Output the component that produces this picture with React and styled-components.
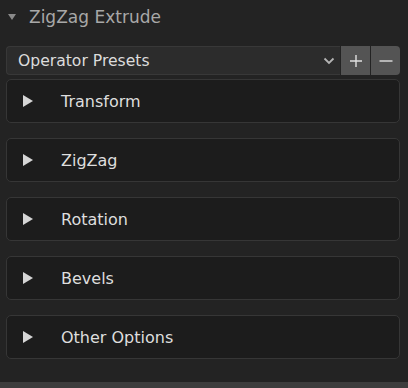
import styled, { createGlobalStyle } from "styled-components";

const GlobalStyle = createGlobalStyle`
    html, body {
        margin: 0;
        padding: 0;
        background: #232323;
        font-family: "DejaVu Sans", "Liberation Sans", sans-serif;
        -webkit-font-smoothing: antialiased;
    }
`;

const Page = styled.div`
    width: 408px;
    height: 388px;
    display: flex;
    flex-direction: column;
    background: #232323;
    overflow: hidden;
`;

const Content = styled.div`
    flex: 1;
    display: flex;
    flex-direction: column;
    padding: 0 8px 0 6px;
`;

const Header = styled.div`
    height: 34px;
    display: flex;
    align-items: center;
    gap: 13px;
    padding-left: 2px;
    color: #a8a8a8;
    font-size: 17px;
    margin-bottom: 12px;
`;

const PresetRow = styled.div`
    display: flex;
    height: 29px;
    gap: 1px;
    margin-bottom: 4px;
`;

const Select = styled.div`
    flex: 1;
    display: flex;
    align-items: center;
    justify-content: space-between;
    padding: 0 5px 0 11px;
    background: #2c2c2c;
    border: 1px solid #383838;
    border-right: none;
    border-radius: 4px 0 0 4px;
    color: #dcdcdc;
    font-size: 15.6px;
`;

const IconButton = styled.div`
    width: 29px;
    display: flex;
    align-items: center;
    justify-content: center;
    background: #545454;
    border-radius: ${(p) => (p.$last ? "0 4px 4px 0" : "0")};
`;

const PanelList = styled.div`
    display: flex;
    flex-direction: column;
    gap: 15px;
`;

const Panel = styled.div`
    height: 42px;
    display: flex;
    align-items: center;
    background: #1c1c1c;
    border: 1px solid #363636;
    border-radius: 5px;
    color: #dedede;
    font-size: 16px;
`;

const Arrow = styled.span`
    width: 54px;
    display: flex;
    padding-left: 16px;
    box-sizing: border-box;
`;

const Viewport = styled.div`
    height: 6px;
    background: #3d3d3d;
`;

const Triangle = ({ down, size = 10, color }) =>
    down ? (
        <svg width="8" height="6" viewBox="0 0 8 6">
            <polygon points="0,0 8,0 4,6" fill={color} />
        </svg>
    ) : (
        <svg width={size} height="12" viewBox="0 0 10 12">
            <polygon points="0,0 10,6 0,12" fill={color} />
        </svg>
    );

const panels = ["Transform", "ZigZag", "Rotation", "Bevels", "Other Options"];

export default function App() {
    return (
        <>
            <GlobalStyle />
            <Page>
                <Content>
                    <Header>
                        <Triangle down color="#8a8a8a" />
                        <span>ZigZag Extrude</span>
                    </Header>
                    <PresetRow>
                        <Select>
                            <span>Operator Presets</span>
                            <svg width="12" height="8" viewBox="0 0 12 8">
                                <polyline points="1.5,1.5 6,6 10.5,1.5" fill="none" stroke="#b4b4b4" strokeWidth="1.8" />
                            </svg>
                        </Select>
                        <IconButton>
                            <svg width="14" height="14" viewBox="0 0 14 14">
                                <path d="M7 1v12M1 7h12" stroke="#e0e0e0" strokeWidth="1.4" />
                            </svg>
                        </IconButton>
                        <IconButton $last>
                            <svg width="14" height="14" viewBox="0 0 14 14">
                                <path d="M0.5 7h13" stroke="#e0e0e0" strokeWidth="1.4" />
                            </svg>
                        </IconButton>
                    </PresetRow>
                    <PanelList>
                        {panels.map((name) => (
                            <Panel key={name}>
                                <Arrow>
                                    <Triangle color="#d6d6d6" />
                                </Arrow>
                                <span>{name}</span>
                            </Panel>
                        ))}
                    </PanelList>
                </Content>
                <Viewport />
            </Page>
        </>
    );
}
